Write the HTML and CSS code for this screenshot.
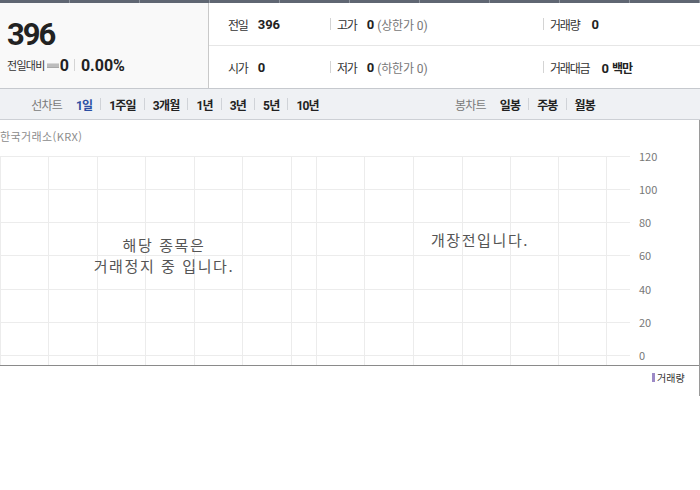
FILE: index.html
```html
<!DOCTYPE html>
<html lang="ko">
<head>
    <meta charset="UTF-8">
    <title>시세 차트</title>
    <link rel="stylesheet" href="styles.css">
</head>
<body>
    <div class="topbar">
        <span></span><span></span><span></span><span></span><span></span>
        <span></span><span></span><span></span><span></span><span></span>
    </div>

    <div class="summary">
        <div class="now">
            <div class="price">396</div>
            <div class="change">
                <span class="change-label">전일대비</span>
                <span class="flat"></span>
                <strong>0</strong>
                <span class="bar"></span>
                <strong>0.00%</strong>
            </div>
        </div>
        <div class="info">
            <div class="info-row">
                <div class="cell c1"><span class="lbl">전일</span><b>396</b></div>
                <div class="cell c2"><span class="lbl">고가</span><b>0</b><em>(상한가 0)</em></div>
                <div class="cell c3"><span class="lbl">거래량</span><b>0</b></div>
            </div>
            <div class="info-row">
                <div class="cell c1"><span class="lbl">시가</span><b>0</b></div>
                <div class="cell c2"><span class="lbl">저가</span><b>0</b><em>(하한가 0)</em></div>
                <div class="cell c3"><span class="lbl">거래대금</span><b>0 <span class="unit">백만</span></b></div>
            </div>
        </div>
    </div>

    <div class="tabs">
        <div class="tab-group">
            <span class="tab-title">선차트</span>
            <a class="on">1일</a><i></i>
            <a>1주일</a><i></i>
            <a>3개월</a><i></i>
            <a>1년</a><i></i>
            <a>3년</a><i></i>
            <a>5년</a><i></i>
            <a>10년</a>
        </div>
        <div class="tab-group">
            <span class="tab-title">봉차트</span>
            <a>일봉</a><i></i>
            <a>주봉</a><i></i>
            <a>월봉</a>
        </div>
    </div>

    <div class="chart">
        <svg width="699" height="276" viewBox="0 0 699 276">
            <g class="grid">
                <line x1="0" y1="36.5" x2="630" y2="36.5"/>
                <line x1="0" y1="69.5" x2="630" y2="69.5"/>
                <line x1="0" y1="102.5" x2="630" y2="102.5"/>
                <line x1="0" y1="135.5" x2="630" y2="135.5"/>
                <line x1="0" y1="169.5" x2="630" y2="169.5"/>
                <line x1="0" y1="202.5" x2="630" y2="202.5"/>
                <line x1="0" y1="235.5" x2="630" y2="235.5"/>

                <line x1="0.5" y1="36" x2="0.5" y2="245"/>
                <line x1="48.5" y1="36" x2="48.5" y2="245"/>
                <line x1="97.5" y1="36" x2="97.5" y2="245"/>
                <line x1="145.5" y1="36" x2="145.5" y2="245"/>
                <line x1="194.5" y1="36" x2="194.5" y2="245"/>
                <line x1="242.5" y1="36" x2="242.5" y2="245"/>
                <line x1="291.5" y1="36" x2="291.5" y2="245"/>
                <line x1="316.5" y1="36" x2="316.5" y2="245"/>
                <line x1="364.5" y1="36" x2="364.5" y2="245"/>
                <line x1="413.5" y1="36" x2="413.5" y2="245"/>
                <line x1="462.5" y1="36" x2="462.5" y2="245"/>
                <line x1="510.5" y1="36" x2="510.5" y2="245"/>
                <line x1="558.5" y1="36" x2="558.5" y2="245"/>
                <line x1="606.5" y1="36" x2="606.5" y2="245"/>
            </g>
            <line class="axis" x1="0" y1="245.5" x2="699" y2="245.5"/>

            <text class="source" x="0" y="21">한국거래소(KRX)</text>

            <g class="ylabels">
                <text x="639" y="41">120</text>
                <text x="639" y="74">100</text>
                <text x="639" y="107">80</text>
                <text x="639" y="140">60</text>
                <text x="639" y="174">40</text>
                <text x="639" y="207">20</text>
                <text x="639" y="240">0</text>
            </g>

            <g class="msg">
                <text x="164" y="131">해당 종목은</text>
                <text x="164" y="152">거래정지 중 입니다.</text>
                <text x="480" y="126">개장전입니다.</text>
            </g>

            <rect class="legend-mark" x="652" y="253" width="3" height="9"/>
            <text class="legend" x="657" y="262">거래량</text>
        </svg>
    </div>
</body>
</html>
```

FILE: styles.css
```css
body {
    margin: 0;
    width: 700px;
    font-family: Roboto, "Noto Sans CJK KR", sans-serif;
    color: #222;
    background: #fff;
}

.topbar {
    display: flex;
    height: 3px;
    background-color: #5f6672;
}

.topbar span {
    flex: 1;
    border-right: 1px solid #8c929c;
}

.summary {
    display: flex;
    height: 85px;
    border-bottom: 1px solid #c6c9ce;
}

.now {
    width: 200px;
    padding-left: 8px;
    background-color: #f9f9f9;
    border-right: 1px solid #c9c9c9;
}

.price {
    margin-top: 14px;
    margin-left: -1px;
    font-size: 31px;
    font-weight: bold;
    letter-spacing: -2px;
    line-height: 36px;
    color: #222;
}

.change {
    display: flex;
    align-items: center;
    margin-top: 2px;
    height: 20px;
}

.change-label {
    font-size: 11px;
    color: #333;
    letter-spacing: -0.7px;
    margin-left: -1px;
}

.flat {
    width: 12px;
    height: 3px;
    margin: 1px 1px 0 2px;
    background-color: #bdbdbd;
    border-top: 1px solid #d8d8d8;
    border-bottom: 1px solid #a9a9a9;
}

.change strong {
    font-size: 16px;
    font-weight: bold;
}

.bar {
    width: 1px;
    height: 12px;
    margin: 0 6px 0 5px;
    background-color: #d4d4d4;
}

.info {
    flex: 1;
}

.info-row {
    display: flex;
    align-items: center;
    height: 42px;
}

.info-row + .info-row {
    border-top: 1px solid #e6e6e6;
}

.cell {
    display: flex;
    align-items: center;
    font-size: 13px;
}

.c1 {
    width: 102px;
    padding-left: 19px;
}

.c2 {
    width: 213px;
}

.c3 {
    flex: 1;
}

.c2::before,
.c3::before {
    content: "";
    width: 1px;
    height: 12px;
    margin-right: 6px;
    background-color: #d4d4d4;
}

.lbl {
    font-size: 12px;
    letter-spacing: -1.2px;
    color: #333;
    margin-right: 10px;
}

.c3 .lbl {
    margin-right: 12px;
}

.cell b {
    font-weight: bold;
    color: #222;
}

.cell .unit {
    font-size: 12px;
    letter-spacing: -1px;
}

.cell em {
    font-style: normal;
    color: #777;
    font-size: 12px;
    letter-spacing: -0.1px;
    margin-left: 3px;
}

.tabs {
    display: flex;
    height: 30px;
    background-color: #eff1f4;
    border-bottom: 1px solid #cdd0d5;
}

.tab-group {
    flex: 1;
    display: flex;
    align-items: center;
    justify-content: center;
    font-size: 12px;
    letter-spacing: -0.8px;
}

.tab-title {
    color: #7a7a7a;
    margin-right: 14px;
}

.tab-group a {
    font-weight: bold;
    color: #222;
}

.tab-group a.on {
    color: #2b4fa3;
}

.tab-group i {
    width: 1px;
    height: 12px;
    margin: 0 8px;
    background-color: #d0d3d8;
}

.chart {
    width: 699px;
    height: 276px;
    border-right: 1px solid #9a9a9a;
}

.chart svg {
    display: block;
    font-family: "Noto Sans CJK KR", sans-serif;
}

.grid line {
    stroke: #ececec;
    stroke-width: 1;
}

.axis {
    stroke: #8a8a8a;
    stroke-width: 1;
}

.source {
    font-size: 11px;
    letter-spacing: 0.4px;
    fill: #8c8c8c;
}

.ylabels text {
    font-size: 11px;
    fill: #777;
}

.msg text {
    font-size: 15px;
    letter-spacing: 1.6px;
    fill: #555;
    text-anchor: middle;
}

.legend-mark {
    fill: #9d8ac6;
}

.legend {
    font-size: 10px;
    fill: #333;
}
```
